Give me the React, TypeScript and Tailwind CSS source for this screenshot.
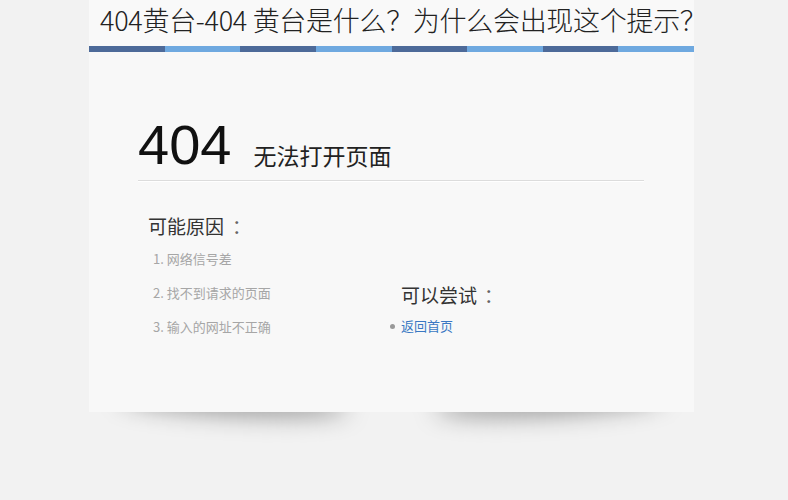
import React from "react";

const cjk = { fontFamily: '"Noto Sans CJK SC", "Noto Sans", sans-serif' };

export default function App() {
  const segs = ["#4d6a99", "#6fa9e0", "#4d6a99", "#6fa9e0", "#4d6a99", "#6fa9e0", "#4d6a99", "#6fa9e0"];
  return (
    <div className="w-full h-[500px] bg-[#f2f2f2] overflow-hidden" style={cjk}>
      <div className="ml-[89px] w-[605px] relative">
        <div className="h-[46px] bg-[#f9f9f9] pl-[11px] pt-[2px] flex items-start">
          <h1 className="text-[27px] leading-[36px] font-light text-[#222] tracking-[-0.3px] whitespace-nowrap">
            404黄台-404 黄台是什么？为什么会出现这个提示？
          </h1>
        </div>
        <div className="flex h-[6px]">
          {segs.map((c, i) => (
            <div key={i} className="flex-1 h-full" style={{ backgroundColor: c }} />
          ))}
        </div>
        <div className="relative">
          <div className="absolute left-[30px] top-[338px] w-[230px] h-[24px] rounded-[50%] bg-black/40 blur-[12px] rotate-[3deg]" />
          <div className="absolute right-[30px] top-[338px] w-[230px] h-[24px] rounded-[50%] bg-black/40 blur-[12px] -rotate-[3deg]" />
          <div className="relative h-[360px] bg-[#f8f8f8] pl-[49px] pt-[65px]">
            <div className="w-[506px] border-b border-[#dcdcdc] shadow-[0_1px_0_#ffffff] flex items-end pb-[7px]">
              <span className="text-[56px] leading-[56px] text-[#111]" style={{ fontFamily: '"Liberation Sans", Arial, sans-serif' }}>
                404
              </span>
              <span className="ml-[22px] mb-[4px] text-[23px] leading-[28px] text-[#222]">无法打开页面</span>
            </div>
            <div className="flex pl-[10px] pt-[32px]">
              <div className="w-[253px]">
                <div className="text-[19px] leading-[26px] text-[#333]">
                  可能原因<span className="ml-[8px] text-[#666]">：</span>
                </div>
                <ul className="mt-[3px] pl-[5px] text-[13px] text-[#a6a6a6] leading-[34px]">
                  <li>1. 网络信号差</li>
                  <li>2. 找不到请求的页面</li>
                  <li>3. 输入的网址不正确</li>
                </ul>
              </div>
              <div className="pt-[69px]">
                <div className="text-[19px] leading-[26px] text-[#333]">
                  可以尝试<span className="ml-[7px] text-[#666]">：</span>
                </div>
                <div className="mt-[9px] flex items-center text-[13px] leading-[18px]">
                  <span className="w-[5px] h-[5px] rounded-full bg-[#999] -ml-[11px] mr-[6px]" />
                  <span className="text-[#3a78c3]">返回首页</span>
                </div>
              </div>
            </div>
          </div>
        </div>
      </div>
    </div>
  );
}
